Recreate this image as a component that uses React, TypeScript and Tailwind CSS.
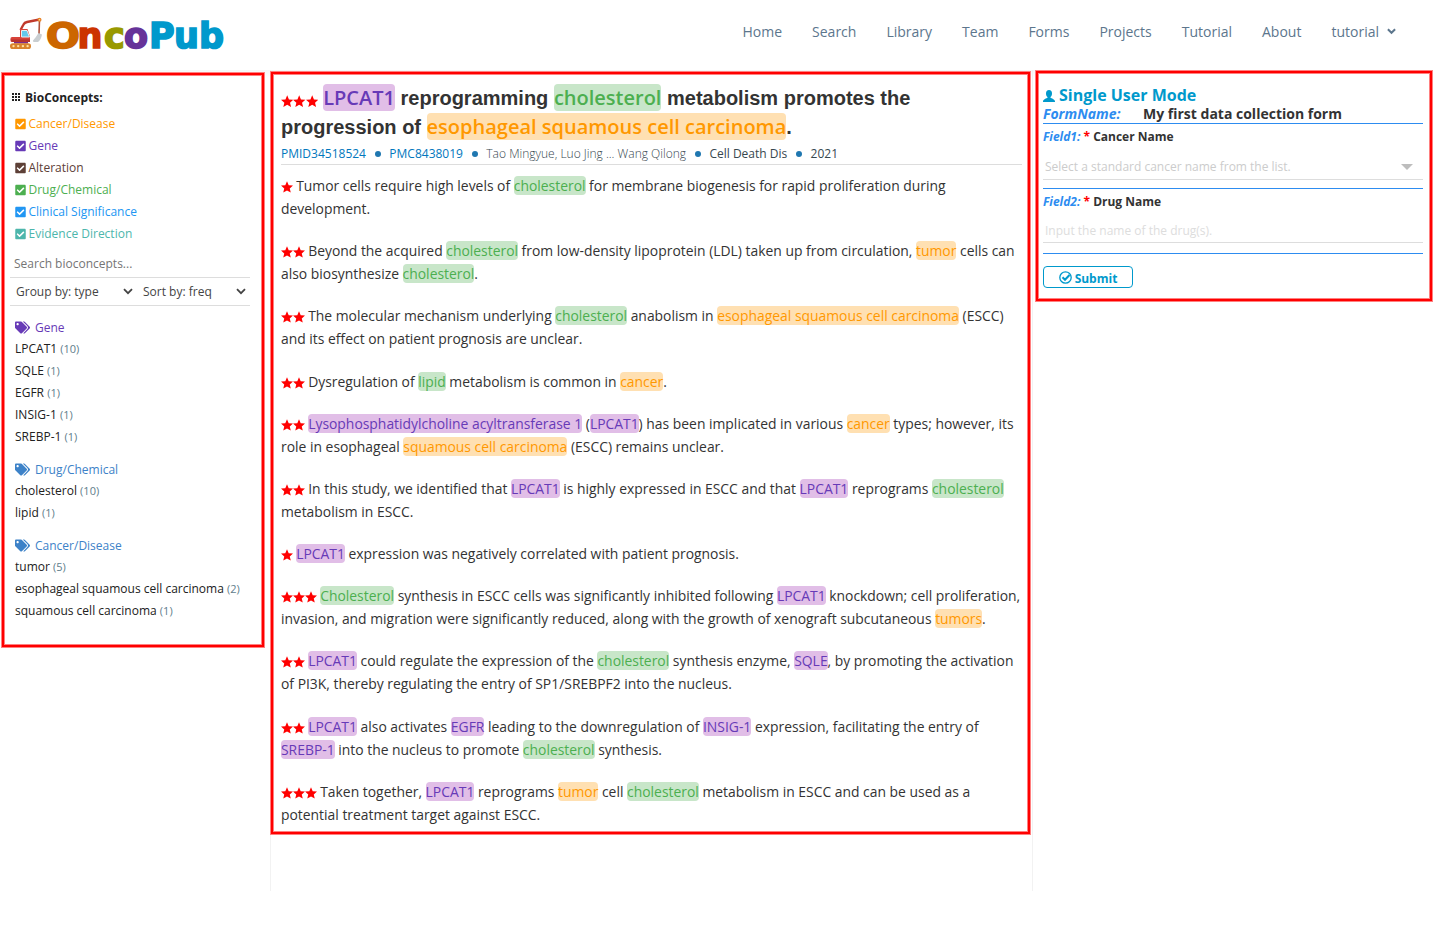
import React from "react";
import { FaCheckSquare, FaTags } from "react-icons/fa";

type Tone = "gene" | "drug" | "cancer";

const tones: Record<Tone, string> = {
  gene: "bg-[#e1bee7] text-[#673ab7]",
  drug: "bg-[#c8e6c9] text-[#4caf50]",
  cancer: "bg-[#ffe0b2] text-[#ff9800]",
};

const codes: Record<string, Tone> = { g: "gene", d: "drug", c: "cancer" };

/* Marks entities written as [g:LPCAT1], [d:lipid] or [c:tumor]. */
function Marked({ text, big = false }: { text: string; big?: boolean }) {
  const parts = text.split(/(\[[gdc]:[^\]]+\])/);
  return (
    <>
      {parts.map((p, i) => {
        const m = p.match(/^\[([gdc]):([^\]]+)\]$/);
        if (!m) return <React.Fragment key={i}>{p}</React.Fragment>;
        return (
          <span
            key={i}
            className={`rounded-[4px] ${big ? "font-['Open_Sans'] leading-[20px] font-semibold" : ""} ${tones[codes[m[1]]]}`}
          >
            {m[2]}
          </span>
        );
      })}
    </>
  );
}

function Stars({ n, big = false }: { n: number; big?: boolean }) {
  return (
    <span className={`inline-flex ${big ? "mr-[5px] align-[-2px]" : "mr-[3.2px] align-[-2px]"}`}>
      {Array.from({ length: n }, (_, i) => (
        <svg key={i} className={big ? "h-[12.4px] w-[12.4px]" : "h-[12px] w-[12px]"} viewBox="0 0 24 24" fill="#ff0000">
          <path d="M12 .5 15.400 8.500 24 9.200 17.500 14.800 19.500 23.200 12 18.800 4.500 23.200 6.500 14.800 0 9.200 8.600 8.500z" />
        </svg>
      ))}
    </span>
  );
}

const sentences: { stars: number; lines: string[] }[] = [
  { stars: 1, lines: ["Tumor cells require high levels of [d:cholesterol] for membrane biogenesis for rapid proliferation during", "development."] },
  { stars: 2, lines: ["Beyond the acquired [d:cholesterol] from low-density lipoprotein (LDL) taken up from circulation, [c:tumor] cells can", "also biosynthesize [d:cholesterol]."] },
  { stars: 2, lines: ["The molecular mechanism underlying [d:cholesterol] anabolism in [c:esophageal squamous cell carcinoma] (ESCC)", "and its effect on patient prognosis are unclear."] },
  { stars: 2, lines: ["Dysregulation of [d:lipid] metabolism is common in [c:cancer]."] },
  { stars: 2, lines: ["[g:Lysophosphatidylcholine acyltransferase 1] ([g:LPCAT1]) has been implicated in various [c:cancer] types; however, its", "role in esophageal [c:squamous cell carcinoma] (ESCC) remains unclear."] },
  { stars: 2, lines: ["In this study, we identified that [g:LPCAT1] is highly expressed in ESCC and that [g:LPCAT1] reprograms [d:cholesterol]", "metabolism in ESCC."] },
  { stars: 1, lines: ["[g:LPCAT1] expression was negatively correlated with patient prognosis."] },
  { stars: 3, lines: ["[d:Cholesterol] synthesis in ESCC cells was significantly inhibited following [g:LPCAT1] knockdown; cell proliferation,", "invasion, and migration were significantly reduced, along with the growth of xenograft subcutaneous [c:tumors]."] },
  { stars: 2, lines: ["[g:LPCAT1] could regulate the expression of the [d:cholesterol] synthesis enzyme, [g:SQLE], by promoting the activation", "of PI3K, thereby regulating the entry of SP1/SREBPF2 into the nucleus."] },
  { stars: 2, lines: ["[g:LPCAT1] also activates [g:EGFR] leading to the downregulation of [g:INSIG-1] expression, facilitating the entry of", "[g:SREBP-1] into the nucleus to promote [d:cholesterol] synthesis."] },
  { stars: 3, lines: ["Taken together, [g:LPCAT1] reprograms [c:tumor] cell [d:cholesterol] metabolism in ESCC and can be used as a", "potential treatment target against ESCC."] },
];

const filters = [
  { label: "Cancer/Disease", color: "text-[#ff9800]" },
  { label: "Gene", color: "text-[#673ab7]" },
  { label: "Alteration", color: "text-[#5d4037]" },
  { label: "Drug/Chemical", color: "text-[#4caf50]" },
  { label: "Clinical Significance", color: "text-[#2196f3]" },
  { label: "Evidence Direction", color: "text-[#4db6ac]" },
];

const groups = [
  { title: "Gene", color: "text-[#673ab7]", items: [["LPCAT1", 10], ["SQLE", 1], ["EGFR", 1], ["INSIG-1", 1], ["SREBP-1", 1]] },
  { title: "Drug/Chemical", color: "text-[#3d82c8]", items: [["cholesterol", 10], ["lipid", 1]] },
  { title: "Cancer/Disease", color: "text-[#3d82c8]", items: [["tumor", 5], ["esophageal squamous cell carcinoma", 2], ["squamous cell carcinoma", 1]] },
];

function Excavator() {
  return (
    <svg className="h-[33px] w-[33px]" viewBox="0 0 33 33">
      <path d="M10.500 13 13.500 7.500Q14.500 5.500 17 5L29.500 2.500" fill="none" stroke="#c0392b" strokeWidth="2.400" />
      <path d="M29.500 3 29 17" stroke="#b0523a" strokeWidth="1.600" />
      <path d="M0.500 21.500Q.5 20 2 20h8v-8h7.500L20 19.500V25H2q-1.500 0-1.500-1.500z" fill="#d8433a" />
      <path d="M.5 22.500H20V25H2z" fill="#b8322d" />
      <path d="M11.500 13.500H17L19.500 20h-8z" fill="#64c8ec" stroke="#e6eef2" strokeWidth="1" />
      <path d="M28.500 16 32 17.500Q31 23 28 25H24.500Q22.500 25 23 23.500L25.500 20.500z" fill="#c9ced1" />
      <rect x="4" y="25" width="14" height="1.500" fill="#7b2d8e" />
      <rect x="0" y="26.300" width="21" height="5.700" rx="2.850" fill="#d9822b" />
      <g fill="#ffe1a0">
        <circle cx="3.500" cy="29.100" r="1.200" />
        <circle cx="8.200" cy="29.100" r="1.200" />
        <circle cx="12.900" cy="29.100" r="1.200" />
        <circle cx="17.600" cy="29.100" r="1.200" />
      </g>
      <circle cx="29.500" cy="2.800" r="2" fill="#e67e22" />
      <circle cx="29.500" cy="2.800" r=".8" fill="#ffd9a0" />
    </svg>
  );
}

function Chevron({ className }: { className: string }) {
  return (
    <svg className={className} viewBox="0 0 10 7" fill="none" stroke="currentColor" strokeWidth="1.8">
      <path d="M1 1.2 5 5.2 9 1.2" />
    </svg>
  );
}

function Header() {
  return (
    <header className="flex h-[70px] shrink-0 items-start">
      <div className="flex items-start pt-[17px] pl-[10px]">
        <Excavator />
        <h1 className="ml-[3px] flex font-['DejaVu_Sans'] text-[35px] leading-[38px] font-bold [-webkit-text-stroke:1.6px_currentColor]">
          <span className="w-[31.5px] origin-left scale-x-[1.14] text-[#cc6600]">O</span>
          <span className="w-[26.5px] text-[#cc3300]">n</span>
          <span className="w-[20px] text-[#999900]">c</span>
          <span className="w-[25px] text-[#663399]">o</span>
          <span className="w-[25px] text-[#0099cc]">P</span>
          <span className="w-[25px] text-[#0099cc]">u</span>
          <span className="text-[#0099cc]">b</span>
        </h1>
      </div>
      <nav className="mr-[37px] ml-auto flex gap-[30px] pt-[21px] text-[14px] leading-[21px] text-[#5c768d]">
        {["Home", "Search", "Library", "Team", "Forms", "Projects", "Tutorial", "About"].map((n) => (
          <a key={n}>{n}</a>
        ))}
        <a className="flex items-center">
          tutorial
          <Chevron className="ml-[8px] h-[6.5px] w-[9px] stroke-[2.2]" />
        </a>
      </nav>
    </header>
  );
}

function Sidebar() {
  return (
    <aside className="mt-[3px] ml-[2px] h-[574px] w-[262px] border-2 border-[#ff0000] bg-white pr-[12px] pl-[6px] text-[12px] shadow-[0_0_0_1px_#ff8080,inset_0_0_0_1px_#ff8080]">
      <div className="mt-[14px] flex h-[18px] items-center pl-[2px] font-bold text-[#212121]">
        <svg className="mr-[4px] mb-[2px] h-[9px] w-[9px]" viewBox="0 0 9 9" fill="#212121">
          {[0, 3, 6].map((y) => [0, 3, 6].map((x) => <rect key={`${x}${y}`} x={x} y={y} width="2" height="2" />))}
        </svg>
        BioConcepts:
      </div>
      <ul className="mt-[6px] pl-[5px]">
        {filters.map((f) => (
          <li key={f.label} className={`flex h-[22px] items-center ${f.color}`}>
            <FaCheckSquare className="mr-[2.5px] h-[12px] w-[11px]" />
            {f.label}
          </li>
        ))}
      </ul>
      <div className="mt-[6px] h-[27px] border-b border-[#dddddd] pl-[4px] leading-[26px] text-[#757575]">Search bioconcepts...</div>
      <div className="flex h-[28px] items-center border-b border-[#dddddd] pl-[6px] text-[#444444]">
        <span className="w-[107px]">Group by: type</span>
        <Chevron className="h-[7px] w-[10px]" />
        <span className="ml-[10px] w-[93px]">Sort by: freq</span>
        <Chevron className="h-[7px] w-[10px]" />
      </div>
      {groups.map((g) => (
        <section key={g.title} className="mt-[11px] pl-[5px]">
          <h3 className={`flex h-[21px] items-center ${g.color}`}>
            <FaTags className="mr-[5px] h-[15px] w-[15px]" />
            {g.title}
          </h3>
          {g.items.map(([name, n]) => (
            <div key={name} className="h-[22px] leading-[22px] whitespace-nowrap text-[#212121]">
              {name} <span className="text-[11px] text-[#607d8b]">({n})</span>
            </div>
          ))}
        </section>
      ))}
    </aside>
  );
}

function Dot() {
  return <span className="mx-[8.7px] h-[6px] w-[6px] rounded-full bg-[#1f77b0]" />;
}

function Article() {
  return (
    <main className="ml-[6px] h-[821px] w-[763px] border-x border-[#f2f2f2]">
      <article className="mt-[2px] h-[762px] w-[759px] border-2 border-[#ff0000] bg-white pl-[8px] text-[#333333] shadow-[0_0_0_1px_#ff8080,inset_0_0_0_1px_#ff8080]">
        <h2 className="mt-[10px] h-[59px] font-['Liberation_Sans'] text-[20px] leading-[29px] font-bold whitespace-nowrap">
          <div className="h-[29px]">
            <Stars n={3} big />
            <Marked big text="[g:LPCAT1] reprogramming [d:cholesterol] metabolism promotes the" />
          </div>
          <div className="h-[29px]">
            <Marked big text="progression of [c:esophageal squamous cell carcinoma]." />
          </div>
        </h2>
        <div className="flex h-[22px] w-[741px] items-center border-b border-[#dddddd] text-[12px] whitespace-nowrap text-[#37474f]">
          <span className="text-[#0277bd]">PMID34518524</span>
          <Dot />
          <span className="text-[#0277bd]">PMC8438019</span>
          <Dot />
          <span className="font-light">Tao Mingyue, Luo Jing ... Wang Qilong</span>
          <Dot />
          <span>Cell Death Dis</span>
          <Dot />
          <span>2021</span>
        </div>
        <div className="pt-[9px] text-[13.9px] leading-[23.1px] whitespace-nowrap">
          {sentences.map((s, i) => (
            <p key={i} className="mb-[19px]">
              <Stars n={s.stars} />
              {s.lines.map((l, j) => (
                <React.Fragment key={j}>
                  {j > 0 && <br />}
                  <Marked text={l} />
                </React.Fragment>
              ))}
            </p>
          ))}
        </div>
      </article>
    </main>
  );
}

function FormPanel() {
  return (
    <aside className="mt-[1px] ml-[3px] h-[230px] w-[396px] border-2 border-[#ff0000] bg-white pr-[7px] pl-[5px] text-[#333333] shadow-[0_0_0_1px_#ff8080,inset_0_0_0_1px_#ff8080]">
      <div className="mt-[12px] flex h-[20px] items-center text-[16px] leading-[20px] font-bold text-[#0099cc]">
        <svg className="mt-[1px] mr-[4px] h-[12px] w-[12px]" viewBox="0 0 12 12" fill="currentColor">
          <path d="M6 0C4 0 3 1.400 3 3.400c0 1.700.7 2.800 1.500 3.600v.8C3.500 8.600.2 9 0 11.500V12h12v-.5C11.800 9 8.500 8.600 7.500 7.800V7C8.300 6.200 9 5.100 9 3.400 9 1.400 8 0 6 0z" />
        </svg>
        Single User Mode
      </div>
      <div className="flex h-[19px] items-start border-b border-[#2d8cf0] text-[14px] leading-[18px] font-bold">
        <span className="w-[100px] text-[#2d8cf0] italic">FormName:</span>My first data collection form
      </div>
      <div className="h-[65px] border-b border-[#2d8cf0]">
        <div className="pt-[4px] text-[12px] leading-[18px] font-bold">
          <em className="text-[#2d8cf0]">Field1:</em> <span className="text-[#ff0000]">*</span> Cancer Name
        </div>
        <div className="mt-[8px] flex h-[26px] items-center border-b border-[#dddddd] pr-[10px] pl-[2px] text-[12px] text-[#cccccc]">
          Select a standard cancer name from the list.
          <svg className="ml-auto h-[6px] w-[12px]" viewBox="0 0 12 6" fill="#bdbdbd">
            <path d="M0 0h12L6 6z" />
          </svg>
        </div>
      </div>
      <div className="h-[65px] border-b border-[#2d8cf0]">
        <div className="pt-[4px] text-[12px] leading-[18px] font-bold">
          <em className="text-[#2d8cf0]">Field2:</em> <span className="text-[#ff0000]">*</span> Drug Name
        </div>
        <div className="mt-[8px] flex h-[24px] items-center border-b border-[#dddddd] pl-[2px] text-[12px] text-[#dddddd]">Input the name of the drug(s).</div>
      </div>
      <button className="mt-[12px] flex h-[22px] w-[90px] items-center justify-center rounded-[4px] border border-[#0099cc] pt-[4px] text-[12px] font-bold text-[#0099cc]">
        <svg className="mr-[3px] mb-[3px] h-[13px] w-[13px]" viewBox="0 0 13 13" fill="none" stroke="currentColor">
          <circle cx="6.500" cy="6.500" r="5.700" strokeWidth="1.300" />
          <path d="M3.500 6.300 6 8.800 10.500 4" strokeWidth="2" />
        </svg>
        Submit
      </button>
    </aside>
  );
}

export default function App() {
  return (
    <div className="flex h-[927px] w-[1433px] flex-col overflow-hidden bg-white font-['Open_Sans',sans-serif]">
      <Header />
      <div className="flex items-start bg-linear-to-b from-[#f5f6f7] to-white to-[8px]">
        <Sidebar />
        <Article />
        <FormPanel />
      </div>
    </div>
  );
}
